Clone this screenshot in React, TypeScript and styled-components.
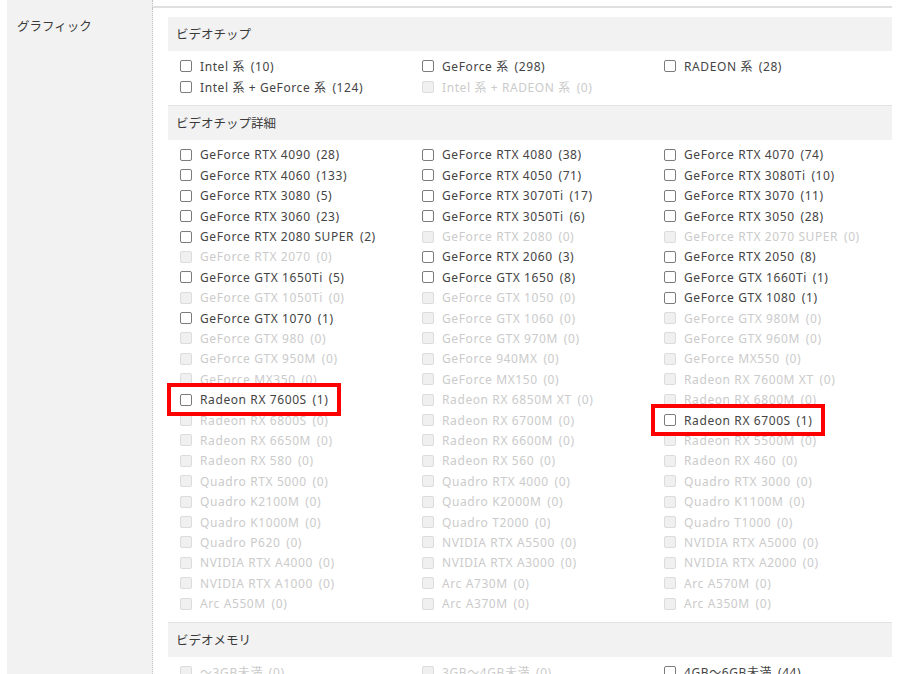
import React from 'react';
import styled, { createGlobalStyle } from 'styled-components';

const GlobalStyle = createGlobalStyle`
  html {
    overflow: hidden;
  }
  body {
    margin: 0;
    background: #fff;
    color: #333;
    font-family: "Noto Sans", "Noto Sans CJK JP", sans-serif;
  }
`;

type Item = {
  label: string;
  count: number;
  marked?: boolean;
};

const chipItems: Item[] = [
  { label: 'Intel 系', count: 10 },
  { label: 'GeForce 系', count: 298 },
  { label: 'RADEON 系', count: 28 },
  { label: 'Intel 系 + GeForce 系', count: 124 },
  { label: 'Intel 系 + RADEON 系', count: 0 },
];

const detailItems: Item[] = [
  { label: 'GeForce RTX 4090', count: 28 },
  { label: 'GeForce RTX 4080', count: 38 },
  { label: 'GeForce RTX 4070', count: 74 },
  { label: 'GeForce RTX 4060', count: 133 },
  { label: 'GeForce RTX 4050', count: 71 },
  { label: 'GeForce RTX 3080Ti', count: 10 },
  { label: 'GeForce RTX 3080', count: 5 },
  { label: 'GeForce RTX 3070Ti', count: 17 },
  { label: 'GeForce RTX 3070', count: 11 },
  { label: 'GeForce RTX 3060', count: 23 },
  { label: 'GeForce RTX 3050Ti', count: 6 },
  { label: 'GeForce RTX 3050', count: 28 },
  { label: 'GeForce RTX 2080 SUPER', count: 2 },
  { label: 'GeForce RTX 2080', count: 0 },
  { label: 'GeForce RTX 2070 SUPER', count: 0 },
  { label: 'GeForce RTX 2070', count: 0 },
  { label: 'GeForce RTX 2060', count: 3 },
  { label: 'GeForce RTX 2050', count: 8 },
  { label: 'GeForce GTX 1650Ti', count: 5 },
  { label: 'GeForce GTX 1650', count: 8 },
  { label: 'GeForce GTX 1660Ti', count: 1 },
  { label: 'GeForce GTX 1050Ti', count: 0 },
  { label: 'GeForce GTX 1050', count: 0 },
  { label: 'GeForce GTX 1080', count: 1 },
  { label: 'GeForce GTX 1070', count: 1 },
  { label: 'GeForce GTX 1060', count: 0 },
  { label: 'GeForce GTX 980M', count: 0 },
  { label: 'GeForce GTX 980', count: 0 },
  { label: 'GeForce GTX 970M', count: 0 },
  { label: 'GeForce GTX 960M', count: 0 },
  { label: 'GeForce GTX 950M', count: 0 },
  { label: 'GeForce 940MX', count: 0 },
  { label: 'GeForce MX550', count: 0 },
  { label: 'GeForce MX350', count: 0 },
  { label: 'GeForce MX150', count: 0 },
  { label: 'Radeon RX 7600M XT', count: 0 },
  { label: 'Radeon RX 7600S', count: 1, marked: true },
  { label: 'Radeon RX 6850M XT', count: 0 },
  { label: 'Radeon RX 6800M', count: 0 },
  { label: 'Radeon RX 6800S', count: 0 },
  { label: 'Radeon RX 6700M', count: 0 },
  { label: 'Radeon RX 6700S', count: 1, marked: true },
  { label: 'Radeon RX 6650M', count: 0 },
  { label: 'Radeon RX 6600M', count: 0 },
  { label: 'Radeon RX 5500M', count: 0 },
  { label: 'Radeon RX 580', count: 0 },
  { label: 'Radeon RX 560', count: 0 },
  { label: 'Radeon RX 460', count: 0 },
  { label: 'Quadro RTX 5000', count: 0 },
  { label: 'Quadro RTX 4000', count: 0 },
  { label: 'Quadro RTX 3000', count: 0 },
  { label: 'Quadro K2100M', count: 0 },
  { label: 'Quadro K2000M', count: 0 },
  { label: 'Quadro K1100M', count: 0 },
  { label: 'Quadro K1000M', count: 0 },
  { label: 'Quadro T2000', count: 0 },
  { label: 'Quadro T1000', count: 0 },
  { label: 'Quadro P620', count: 0 },
  { label: 'NVIDIA RTX A5500', count: 0 },
  { label: 'NVIDIA RTX A5000', count: 0 },
  { label: 'NVIDIA RTX A4000', count: 0 },
  { label: 'NVIDIA RTX A3000', count: 0 },
  { label: 'NVIDIA RTX A2000', count: 0 },
  { label: 'NVIDIA RTX A1000', count: 0 },
  { label: 'Arc A730M', count: 0 },
  { label: 'Arc A570M', count: 0 },
  { label: 'Arc A550M', count: 0 },
  { label: 'Arc A370M', count: 0 },
  { label: 'Arc A350M', count: 0 },
];

const memoryItems: Item[] = [
  { label: '〜3GB未満', count: 0 },
  { label: '3GB〜4GB未満', count: 0 },
  { label: '4GB〜6GB未満', count: 44 },
];

const Page = styled.div`
  padding: 0 8px 0 7px;
`;

const TableRow = styled.div<{ $stub?: boolean }>`
  display: grid;
  grid-template-columns: 146px 1fr;
  height: ${(p) => (p.$stub ? '6px' : 'auto')};
  border-bottom: ${(p) => (p.$stub ? '2px solid #e0e0e0' : 'none')};
`;

const HeadCell = styled.div`
  background: #f2f2f2;
  border-right: 1px dotted #c4c4c4;
  padding: 10px 10px;
  font-family: "Noto Sans CJK JP", sans-serif;
  font-size: 12.5px;
  line-height: 16px;
  color: #3a3a3a;
`;

const BodyCell = styled.div`
  padding: 9px 0 0 15px;
`;

const Section = styled.div<{ $first?: boolean }>`
  border-top: ${(p) => (p.$first ? 'none' : '1px solid #e2e2e2')};
`;

const SectionHead = styled.div`
  height: 34px;
  line-height: 34px;
  padding-left: 8px;
  background: #f2f2f2;
  font-family: "Noto Sans CJK JP", sans-serif;
  font-size: 12.5px;
  color: #3a3a3a;
`;

const ItemGrid = styled.div`
  display: grid;
  grid-template-columns: 242px 242px 1fr;
  grid-auto-rows: 20.4px;
  padding: 5px 0 8px 12px;
`;

const Option = styled.label<{ $disabled: boolean; $marked?: boolean }>`
  position: relative;
  justify-self: start;
  display: inline-flex;
  align-items: center;
  gap: 8px;
  font-size: 12px;
  letter-spacing: 0.6px;
  white-space: nowrap;
  color: ${(p) => (p.$disabled ? '#cbcbcb' : '#444')};

  &::after {
    content: '';
    display: ${(p) => (p.$marked ? 'block' : 'none')};
    position: absolute;
    top: -6px;
    bottom: -6px;
    left: -13px;
    right: -13px;
    border: 4px solid #ff0000;
    pointer-events: none;
    z-index: 1;
  }
`;

const Box = styled.span<{ $disabled: boolean }>`
  flex: none;
  width: 12px;
  height: 12px;
  box-sizing: border-box;
  border-radius: 2px;
  border: 1px solid ${(p) => (p.$disabled ? '#dcdcdc' : '#7c7c7c')};
  background: ${(p) => (p.$disabled ? '#f0f0f0' : '#fff')};
`;

const Count = styled.span`
  margin-left: 2px;
`;

const OptionList: React.FC<{ items: Item[] }> = ({ items }) => (
  <ItemGrid>
    {items.map((it) => {
      const disabled = it.count === 0;
      return (
        <Option key={it.label} $disabled={disabled} $marked={it.marked}>
          <Box $disabled={disabled} />
          <span>
            {it.label} <Count>({it.count})</Count>
          </span>
        </Option>
      );
    })}
  </ItemGrid>
);

const App: React.FC = () => {
  return (
    <>
      <GlobalStyle />
      <Page>
        <TableRow $stub>
          <HeadCell />
          <div />
        </TableRow>
        <TableRow>
          <HeadCell>グラフィック</HeadCell>
          <BodyCell>
            <Section $first>
              <SectionHead>ビデオチップ</SectionHead>
              <OptionList items={chipItems} />
            </Section>
            <Section>
              <SectionHead>ビデオチップ詳細</SectionHead>
              <OptionList items={detailItems} />
            </Section>
            <Section>
              <SectionHead>ビデオメモリ</SectionHead>
              <OptionList items={memoryItems} />
            </Section>
          </BodyCell>
        </TableRow>
      </Page>
    </>
  );
};

export default App;
